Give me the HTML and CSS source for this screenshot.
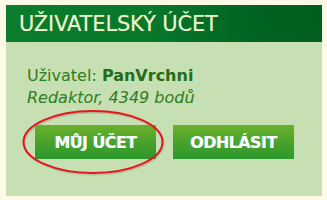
FILE: index.html
```html
<!DOCTYPE html>
<html>
<head>
<meta charset="utf-8">
<link rel="stylesheet" href="styles.css">
</head>
<body>
<div class="panel">
  <div class="head">UŽIVATELSKÝ ÚČET</div>
  <div class="body">
    <div class="user">Uživatel: <b>PanVrchni</b></div>
    <div class="role">Redaktor, 4349 bodů</div>
    <div class="buttons">
      <a class="btn">MŮJ ÚČET</a>
      <a class="btn">ODHLÁSIT</a>
    </div>
    <svg class="circle" width="144" height="66" viewBox="0 0 144 66">
      <ellipse cx="71" cy="32" rx="69.5" ry="31" fill="none" stroke="#7a8a70" stroke-opacity="0.35" stroke-width="2" transform="translate(1,1.5)"/>
      <ellipse cx="71" cy="32" rx="69.5" ry="31" fill="none" stroke="#e8141c" stroke-width="2"/>
    </svg>
  </div>
</div>
</body>
</html>
```
FILE: styles.css
```css
html, body { margin: 0; padding: 0; }
body {
  background: #fcf9e7;
  width: 327px;
  height: 200px;
  padding: 5px 5px 0 6px;
  box-sizing: border-box;
  font-family: "DejaVu Sans", Verdana, sans-serif;
}
.panel {
  width: 316px;
  height: 191px;
  display: flex;
  flex-direction: column;
}
.head {
  height: 37px;
  background: linear-gradient(to right, #0b7d2d 0%, #08782a 45%, #006222 80%, #005f1f 100%);
  color: #eef5cf;
  font-size: 21px;
  line-height: 39px;
  padding-left: 13px;
  letter-spacing: -0.15px;
  text-shadow: 0 0 1px rgba(200,230,160,0.4);
}
.body {
  flex: 1;
  background: #c6dfb3;
  padding: 23px 0 0 21px;
  position: relative;
  color: #2e7d1e;
  font-size: 16px;
}
.user { line-height: 22px; }
.user b { font-weight: bold; color: #236e16; }
.role { font-style: italic; line-height: 22px; }
.buttons {
  display: flex;
  gap: 17px;
  margin-top: 16px;
  padding-left: 8px;
}
.btn {
  width: 121px;
  height: 34px;
  background: linear-gradient(to bottom, #6cb02a 0%, #49a22b 50%, #2b992b 100%);
  color: #ffffff;
  font-weight: bold;
  font-size: 16px;
  line-height: 35px;
  text-align: center;
  text-shadow: -1px 0 0 rgba(120,230,255,0.35);
  letter-spacing: -0.6px;
}
.circle {
  position: absolute;
  left: 16px;
  top: 68px;
}
```
